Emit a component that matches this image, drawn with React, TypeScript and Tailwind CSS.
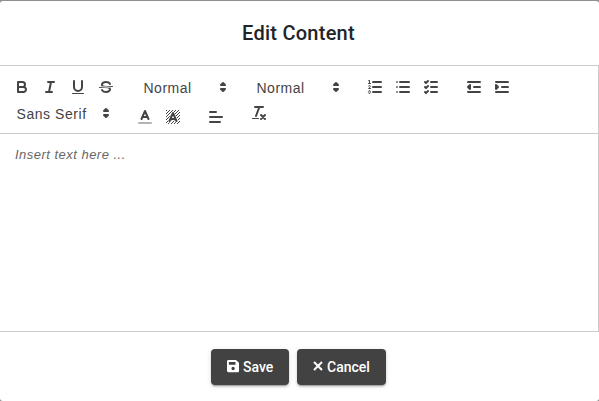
import type { ReactNode } from "react";

function Icon({ children }: { children: ReactNode }) {
  return (
    <svg viewBox="0 0 18 18" className="size-[18px] shrink-0" fill="none" stroke="#444" strokeWidth="2" strokeLinecap="round" strokeLinejoin="round">
      {children}
    </svg>
  );
}

function Tool({ label, children }: { label: string; children: ReactNode }) {
  return (
    <button aria-label={label} className="flex h-6 w-7 shrink-0 items-center justify-center">
      <Icon>{children}</Icon>
    </button>
  );
}

function Picker({ label, className }: { label: string; className: string }) {
  return (
    <button className={`flex h-6 items-center justify-between text-[14px] font-normal ${className}`}>
      <span className="pt-0.5">{label}</span>
      <Icon>
        <polygon points="7 11 9 13 11 11 7 11" />
        <polygon points="7 7 9 5 11 7 7 7" />
      </Icon>
    </button>
  );
}

export default function App() {
  return (
    <div className="h-[401px] w-[599px] overflow-hidden bg-[#8f8f8f] pt-px font-['Roboto',sans-serif]">
      <div className="flex h-[400px] flex-col rounded-[3px] bg-white">
        <h1 className="flex h-16 shrink-0 items-center justify-center pr-[2px] text-[20px] font-medium tracking-[0.25px] text-[#212529]">Edit Content</h1>
        <section className="h-[267px] border-y border-r border-[#ccc] font-['Liberation_Sans',Arial,sans-serif] text-[#444]">
          <div className="h-[68px] border-b border-[#ccc] pl-2 pt-[9px]">
            <div className="flex h-[26px]">
              <div className="mr-[15px] flex">
                <Tool label="Bold">
                  <path d="M5,4H9.5A2.5,2.5,0,0,1,12,6.5v0A2.5,2.5,0,0,1,9.5,9H5V4Z" />
                  <path d="M5,9h5.5A2.5,2.5,0,0,1,13,11.5v0A2.5,2.5,0,0,1,10.5,14H5V9Z" />
                </Tool>
                <Tool label="Italic"><path d="M7 4h6M5 14h6M8 14l2-10" /></Tool>
                <Tool label="Underline">
                  <path d="M5,3V9a4.012,4.012,0,0,0,4,4H9a4.012,4.012,0,0,0,4-4V3" />
                  <rect fill="#444" stroke="none" height="1" rx=".5" width="12" x="3" y="15" />
                </Tool>
                <Tool label="Strike">
                  <path strokeWidth="1" d="M15.5 8.5L2.5 9.5" />
                  <path fill="#444" stroke="none" d="M9.007,8C6.542,7.791,6,7.519,6,6.5,6,5.792,7.283,5,9,5c1.571,0,2.765.679,2.969,1.309a1,1,0,0,0,1.9-.617C13.356,4.106,11.354,3,9,3,6.2,3,4,4.538,4,6.5a3.2,3.2,0,0,0,.5,1.843Z" />
                  <path fill="#444" stroke="none" d="M8.984,10C11.457,10.208,12,10.479,12,11.5c0,0.708-1.283,1.5-3,1.5-1.571,0-2.765-.679-2.969-1.309a1,1,0,1,0-1.9.617C4.644,13.894,6.646,15,9,15c2.8,0,5-1.538,5-3.5a3.2,3.2,0,0,0-.5-1.843Z" />
                </Tool>
              </div>
              <Picker label="Normal" className="mr-[15px] w-[97px] pl-[8.5px] tracking-[0.5px]" />
              <Picker label="Normal" className="mr-4 w-[98px] pl-[9.5px] tracking-[0.5px]" />
              <div className="mr-[15px] flex">
                <Tool label="Ordered list">
                  <path d="M7 4h8M7 9h8M7 14h8" />
                  <path strokeWidth="1" d="M2.5 5.5h2" />
                  <path fill="#444" stroke="none" d="M3.5,6A0.5,0.5,0,0,1,3,5.5V3.085l-0.276.138A0.5,0.5,0,0,1,2.053,3c-0.124-.247-0.023-0.324.224-0.447l1-.5A0.5,0.5,0,0,1,4,2.5v3A0.5,0.5,0,0,1,3.5,6Z" />
                  <path strokeWidth="1" d="M4.5,10.5h-2c0-.234,1.85-1.076,1.85-2.234A0.959,0.959,0,0,0,2.5,8.156" />
                  <path strokeWidth="1" d="M2.5,14.846a0.959,0.959,0,0,0,1.85-.109A0.7,0.7,0,0,0,3.75,14a0.688,0.688,0,0,0,.6-0.736,0.959,0.959,0,0,0-1.85-.109" />
                </Tool>
                <Tool label="Bullet list">
                  <path d="M6 4h9M6 9h9M6 14h9" />
                  <path opacity=".8" d="M3 4h0M3 9h0M3 14h0" />
                </Tool>
                <Tool label="Check list"><path d="M9 4h6M3 4l1 1 2-2M9 9h6M3 9l1 1 2-2M9 14h6M3 14l1 1 2-2" /></Tool>
              </div>
              <Tool label="Outdent">
                <path d="M3 14h12M3 4h12M9 9h6" />
                <polygon fill="#444" points="5 7 5 11 3 9" />
              </Tool>
              <Tool label="Indent">
                <path d="M3 14h12M3 4h12M9 9h6" />
                <polygon fill="#444" points="3 7 3 11 5 9" />
              </Tool>
            </div>
            <div className="flex h-[31px]">
              <Picker label="Sans Serif" className="mr-4 w-[107px] pl-[8.5px] tracking-[0.55px]" />
              <div className="mr-[15px] flex pt-1">
                <Tool label="Text color">
                  <path opacity=".4" d="M3 15h12" />
                  <path d="M5.5 11L9 3l3.5 8M6.38 9h5.25" />
                </Tool>
                <Tool label="Highlight color">
                  <path strokeWidth="1" strokeLinecap="butt" d="M2 3L3 2M2 6L6 2M2 9L9 2M2 12L12 2M2 15L15 2M4 16L16 4M7 16L16 7M10 16L16 10M13 16L16 13" />
                  <path stroke="white" strokeWidth="3" d="M5.5 13L9 5l3.5 8M6.38 11h5.25" />
                  <path d="M5.5 13L9 5l3.5 8M6.38 11h5.25" />
                </Tool>
              </div>
              <div className="mr-[15px] pt-1">
                <Tool label="Align left"><path d="M3 9h12M3 14h10M3 4h6" /></Tool>
              </div>
              <Tool label="Clear formatting">
                <path d="M5 3h8M6 12l3.35-9M11 11l4 4M15 11l-4 4" />
                <rect fill="#444" stroke="none" height="1" rx=".5" width="7" x="2" y="14" />
              </Tool>
            </div>
          </div>
          <p className="px-[15px] pt-3 text-[13px] italic leading-[18px] tracking-[0.48px] text-[#666]">Insert text here ...</p>
        </section>
        <footer className="flex h-[69px] items-center justify-center gap-2 pr-0.5 text-[14px] font-medium text-white">
          <button className="flex h-9 w-[78px] items-center justify-center gap-1 rounded bg-[#424242] pt-px shadow-[0_3px_1px_-2px_rgba(0,0,0,.2),0_2px_2px_0_rgba(0,0,0,.14),0_1px_5px_0_rgba(0,0,0,.12)]">
            <svg viewBox="0 0 13 13" className="mb-px size-[12.25px]" fill="none">
              <path fill="white" fillRule="evenodd" d="M1.5 0h8L13 3.2v8.3a1.5 1.5 0 0 1-1.5 1.5h-10A1.5 1.5 0 0 1 0 11.5v-10A1.5 1.5 0 0 1 1.5 0ZM2 2v3h7V2ZM6.5 7.2a1.8 1.8 0 1 0 0 3.6 1.8 1.8 0 0 0 0-3.6Z" />
            </svg>
            Save
          </button>
          <button className="flex h-9 w-[89px] items-center justify-center gap-1 rounded bg-[#424242] pt-px shadow-[0_3px_1px_-2px_rgba(0,0,0,.2),0_2px_2px_0_rgba(0,0,0,.14),0_1px_5px_0_rgba(0,0,0,.12)]">
            <svg viewBox="0 0 10 10" className="mb-0.5 size-[10px]" fill="none" stroke="white" strokeWidth="2">
              <path d="M1 1l8 8M9 1L1 9" />
            </svg>
            Cancel
          </button>
        </footer>
      </div>
    </div>
  );
}
